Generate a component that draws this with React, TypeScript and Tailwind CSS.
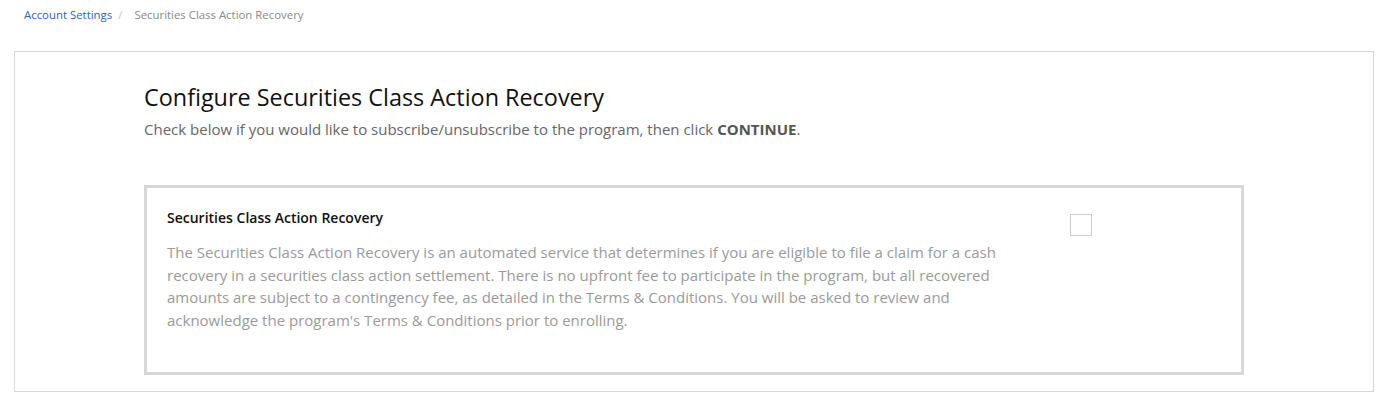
import React from 'react';

const App = () => {
  return (
    <div className="w-[1380px] h-[398px] bg-white font-['Open_Sans',sans-serif] overflow-hidden">
      {/* Breadcrumb */}
      <nav className="flex items-center h-[30px] pl-6 text-[11.4px] leading-none">
        <a href="#" className="text-[#2d5fc4]">Account Settings</a>
        <span className="text-[#c8c8c8] pl-[6px] pr-[12px]">/</span>
        <span className="text-[#888888]">Securities Class Action Recovery</span>
      </nav>

      {/* Panel */}
      <div className="mt-[21px] ml-[14px] w-[1360px] h-[341px] border border-[#d6d6d6] pl-[129px] pt-[30px]">
        <h1 className="text-[23.4px] leading-[30px] text-[#111111] font-normal">
          Configure Securities Class Action Recovery
        </h1>
        <p className="mt-[7px] text-[15px] leading-[20px] text-[#666666]">
          Check below if you would like to subscribe/unsubscribe to the program, then click{' '}
          <span className="font-bold text-[#555555]">CONTINUE</span>.
        </p>

        {/* Option card */}
        <div className="mt-[46px] w-[1100px] h-[190px] border-[3px] border-[#d8d8d8] flex pl-5 pt-[20px]">
          <div className="w-[860px]">
            <h2 className="text-[14px] leading-[20px] font-semibold text-[#111111]">
              Securities Class Action Recovery
            </h2>
            <p className="mt-[13px] text-[15px] leading-[22.5px] text-[#9a9a9a]">
              The Securities Class Action Recovery is an automated service that determines if you are eligible to file a claim for a cash recovery in a securities class action settlement. There is no upfront fee to participate in the program, but all recovered amounts are subject to a contingency fee, as detailed in the Terms &amp; Conditions. You will be asked to review and acknowledge the program's Terms &amp; Conditions prior to enrolling.
            </p>
          </div>
          <div className="ml-[43px] mt-[6px]">
            <input
              type="checkbox"
              className="appearance-none w-[22px] h-[22px] border border-[#cfc9c4] bg-white block"
            />
          </div>
        </div>
      </div>
    </div>
  );
};

export default App;
